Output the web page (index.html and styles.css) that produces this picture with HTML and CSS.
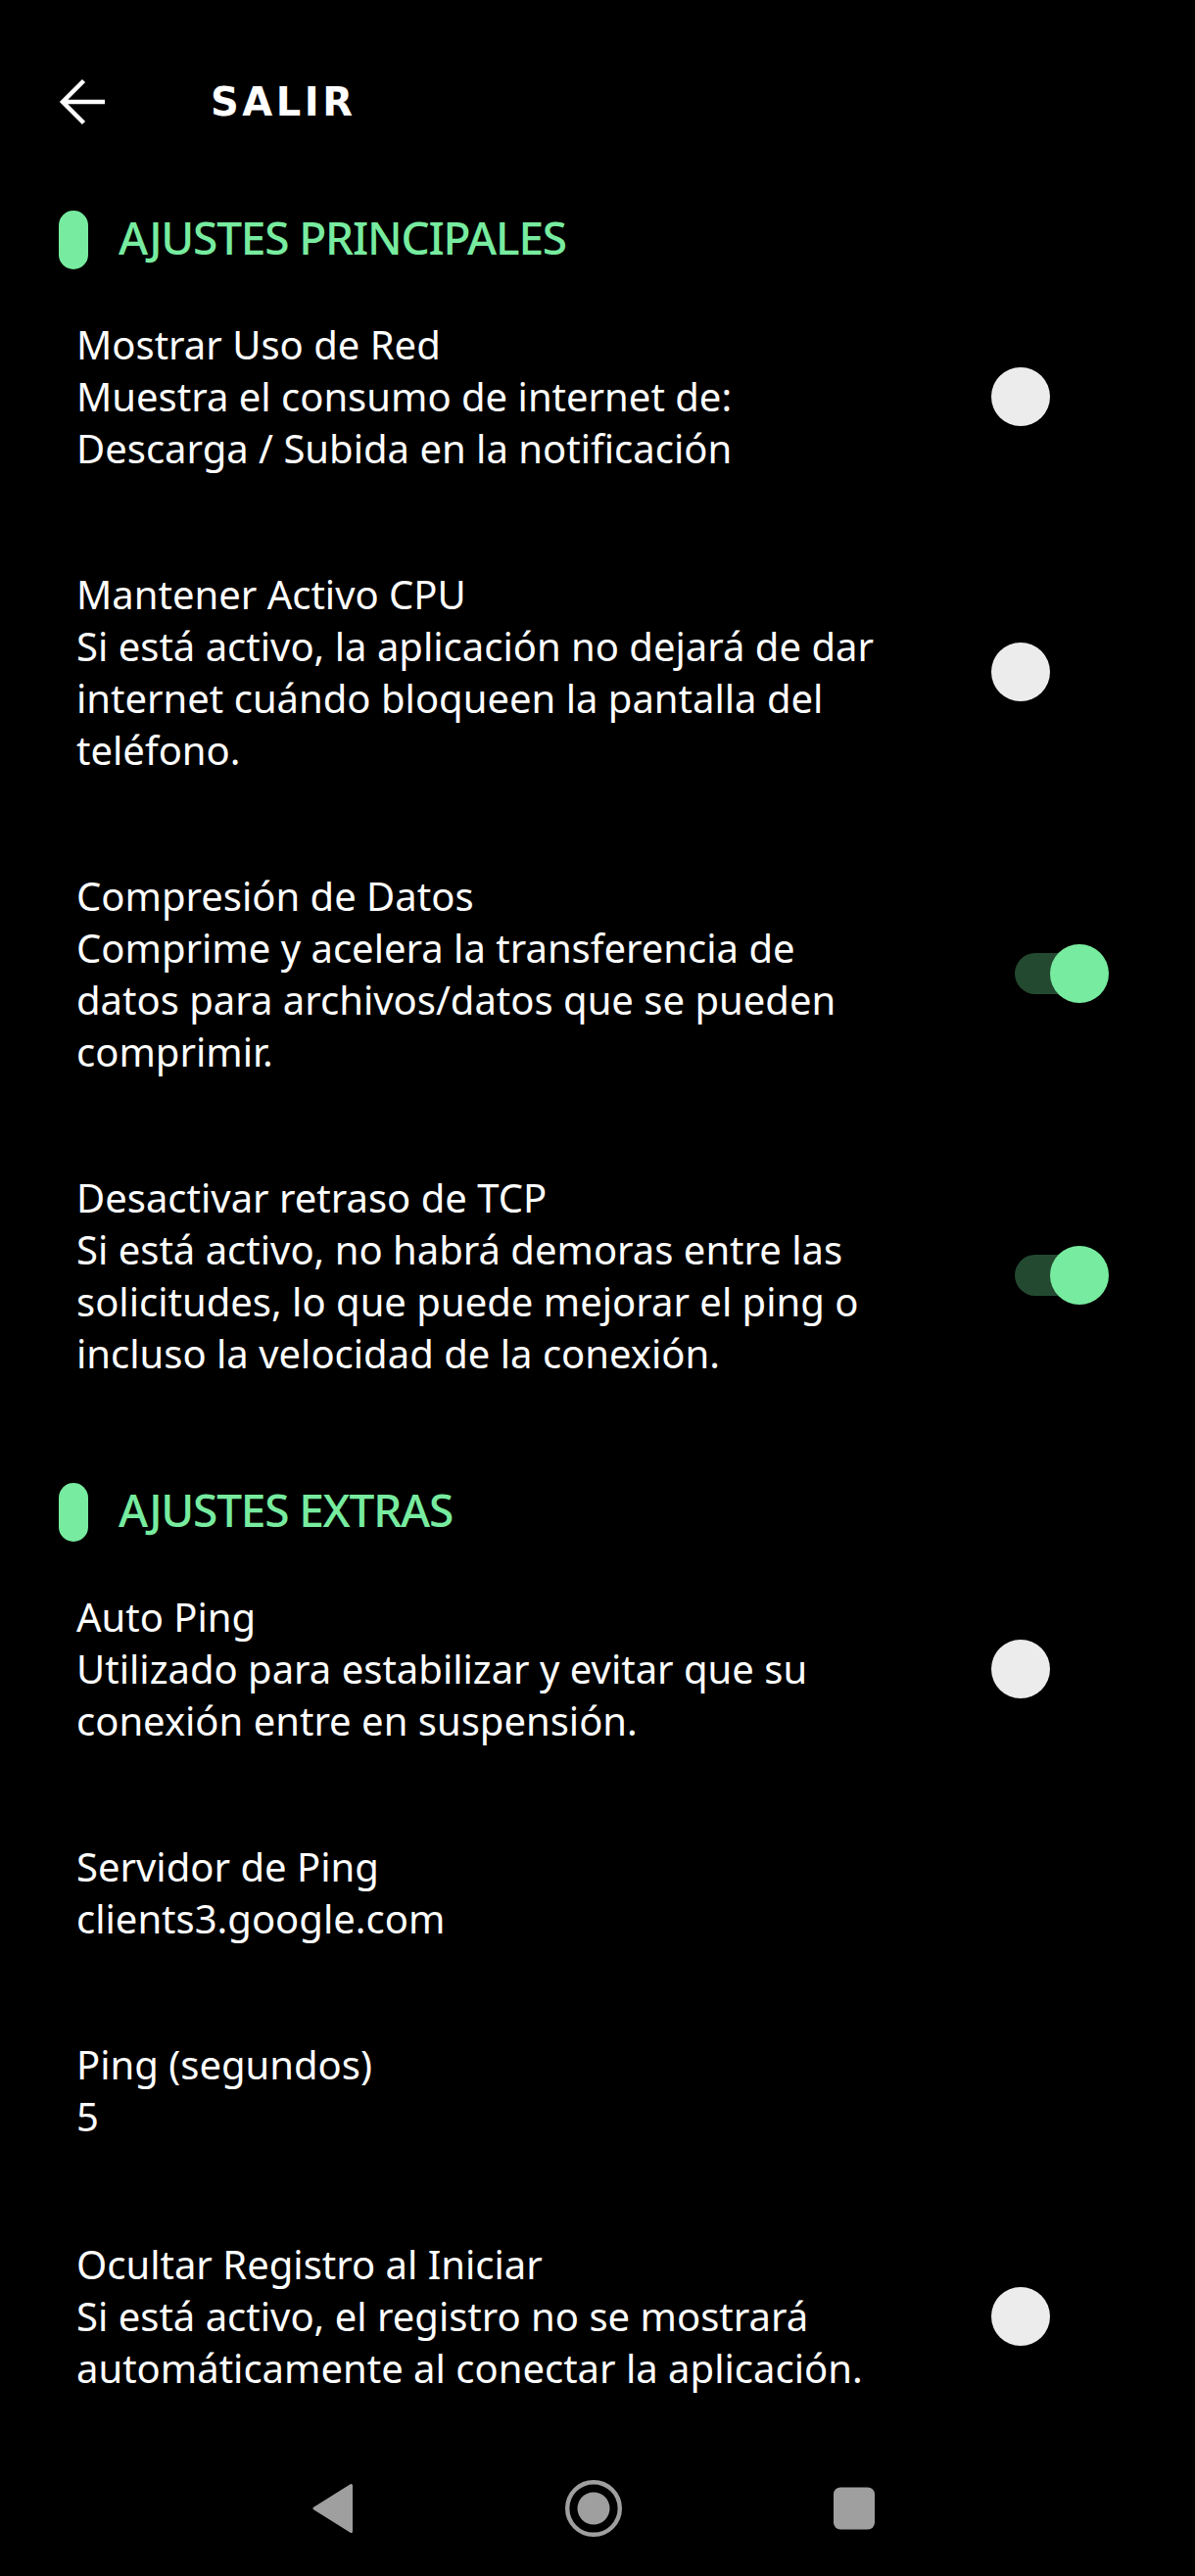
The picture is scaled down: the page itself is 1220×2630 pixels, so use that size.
FILE: index.html
```html
<!DOCTYPE html>
<html lang="es">
<head>
<meta charset="utf-8">
<title>Ajustes</title>
<link rel="stylesheet" href="styles.css">
</head>
<body>
<div class="app">
  <header class="toolbar">
    <svg class="back-icon" viewBox="0 0 48 48" width="48" height="48" aria-hidden="true">
      <path d="M47 24H4 M25.5 2.5L4 24L25.5 45.5" fill="none" stroke="#ffffff" stroke-width="4.5"/>
    </svg>
    <h1 class="toolbar-title">SALIR</h1>
  </header>

  <section class="section">
    <div class="section-head"><span class="pill"></span><h2 class="section-title">AJUSTES PRINCIPALES</h2></div>

    <div class="pref">
      <div class="pref-text">
        <div class="pref-title">Mostrar Uso de Red</div>
        <div class="pref-summary">Muestra el consumo de internet de:<br>Descarga / Subida en la notificación</div>
      </div>
      <div class="pref-widget"><div class="switch"><span class="thumb"></span></div></div>
    </div>

    <div class="pref">
      <div class="pref-text">
        <div class="pref-title">Mantener Activo CPU</div>
        <div class="pref-summary">Si está activo, la aplicación no dejará de dar<br>internet cuándo bloqueen la pantalla del<br>teléfono.</div>
      </div>
      <div class="pref-widget"><div class="switch"><span class="thumb"></span></div></div>
    </div>

    <div class="pref">
      <div class="pref-text">
        <div class="pref-title">Compresión de Datos</div>
        <div class="pref-summary">Comprime y acelera la transferencia de<br>datos para archivos/datos que se pueden<br>comprimir.</div>
      </div>
      <div class="pref-widget"><div class="switch on"><span class="thumb"></span></div></div>
    </div>

    <div class="pref">
      <div class="pref-text">
        <div class="pref-title">Desactivar retraso de TCP</div>
        <div class="pref-summary">Si está activo, no habrá demoras entre las<br>solicitudes, lo que puede mejorar el ping o<br>incluso la velocidad de la conexión.</div>
      </div>
      <div class="pref-widget"><div class="switch on"><span class="thumb"></span></div></div>
    </div>
  </section>

  <section class="section section-extra">
    <div class="section-head"><span class="pill"></span><h2 class="section-title">AJUSTES EXTRAS</h2></div>

    <div class="pref">
      <div class="pref-text">
        <div class="pref-title">Auto Ping</div>
        <div class="pref-summary">Utilizado para estabilizar y evitar que su<br>conexión entre en suspensión.</div>
      </div>
      <div class="pref-widget"><div class="switch"><span class="thumb"></span></div></div>
    </div>

    <div class="pref">
      <div class="pref-text">
        <div class="pref-title">Servidor de Ping</div>
        <div class="pref-summary">clients3.google.com</div>
      </div>
    </div>

    <div class="pref">
      <div class="pref-text">
        <div class="pref-title">Ping (segundos)</div>
        <div class="pref-summary">5</div>
      </div>
    </div>

    <div class="pref pref-last">
      <div class="pref-text">
        <div class="pref-title">Ocultar Registro al Iniciar</div>
        <div class="pref-summary">Si está activo, el registro no se mostrará<br>automáticamente al conectar la aplicación.</div>
      </div>
      <div class="pref-widget"><div class="switch"><span class="thumb"></span></div></div>
    </div>
  </section>

  <nav class="navbar">
    <div class="nav-slot">
      <svg viewBox="0 0 42 52" width="42" height="52" aria-hidden="true">
        <path d="M39.5 2.5 L39.5 49.5 L2 26 Z" fill="#9f9f9f" stroke="#9f9f9f" stroke-width="3" stroke-linejoin="round"/>
      </svg>
    </div>
    <div class="nav-slot">
      <svg viewBox="0 0 60 60" width="60" height="60" aria-hidden="true">
        <circle cx="30" cy="30" r="26.8" fill="none" stroke="#9f9f9f" stroke-width="4.4"/>
        <circle cx="30" cy="30" r="16.5" fill="#9f9f9f"/>
      </svg>
    </div>
    <div class="nav-slot">
      <svg viewBox="0 0 44 44" width="44" height="44" aria-hidden="true">
        <rect x="1" y="0.5" width="42" height="43" rx="7" fill="#9f9f9f"/>
      </svg>
    </div>
  </nav>
</div>
</body>
</html>
```
FILE: styles.css
```css
html, body {
  margin: 0;
  padding: 0;
  background: #000000;
}

body {
  font-family: "Noto Sans", "Open Sans", sans-serif;
  color: #ffffff;
}

.app {
  display: flex;
  flex-direction: column;
  min-height: 2630px;
  width: 1220px;
}

/* Toolbar */
.toolbar {
  height: 208px;
  display: flex;
  align-items: center;
  padding-left: 60px;
  box-sizing: border-box;
}

.back-icon {
  display: block;
  flex: none;
}

.toolbar-title {
  margin: 0 0 0 107px;
  font-family: "DejaVu Sans", sans-serif;
  font-weight: 700;
  font-size: 40px;
  letter-spacing: 3.5px;
  line-height: 1;
  color: #ffffff;
}

/* Sections */
.section {
  display: flex;
  flex-direction: column;
}

.section-extra {
  margin-top: 51px;
}

.section-head {
  display: flex;
  align-items: center;
  padding: 7px 0 2px 60px;
}

.pill {
  width: 30px;
  height: 60px;
  border-radius: 15px;
  background: #77eb9f;
  flex: none;
}

.section-title {
  margin: 0 0 6px 31px;
  font-family: "Noto Sans", sans-serif;
  font-weight: 500;
  font-size: 46px;
  letter-spacing: -1.2px;
  line-height: 1;
  color: #77eb9f;
}

/* Preference rows */
.pref {
  display: flex;
  align-items: center;
  padding: 48px 0;
}

.pref-last {
  padding-top: 50px;
}

.pref-text {
  flex: 1;
  padding-left: 78px;
  font-size: 40px;
  line-height: 53px;
  white-space: nowrap;
}

.pref-title,
.pref-summary {
  color: #ffffff;
}

.pref-widget {
  flex: none;
  width: 120px;
  margin-right: 88px;
  display: flex;
  justify-content: center;
}

/* Switch */
.switch {
  position: relative;
  width: 120px;
  height: 60px;
  display: flex;
  justify-content: flex-start;
  align-items: center;
}

.switch::before {
  content: "";
  position: absolute;
  left: 24px;
  right: 24px;
  top: 9px;
  height: 42px;
  border-radius: 21px;
  background: transparent;
}

.thumb {
  position: relative;
  width: 60px;
  height: 60px;
  border-radius: 50%;
  background: #ececec;
}

.switch.on {
  justify-content: flex-end;
}

.switch.on::before {
  background: #234a31;
}

.switch.on .thumb {
  background: #77eb9f;
}

/* Navigation bar */
.navbar {
  flex: 1;
  display: flex;
  justify-content: center;
  align-items: center;
  padding-right: 8px;
}

.nav-slot {
  width: 266px;
  display: flex;
  justify-content: center;
  align-items: center;
}

.nav-slot svg {
  display: block;
}
```
